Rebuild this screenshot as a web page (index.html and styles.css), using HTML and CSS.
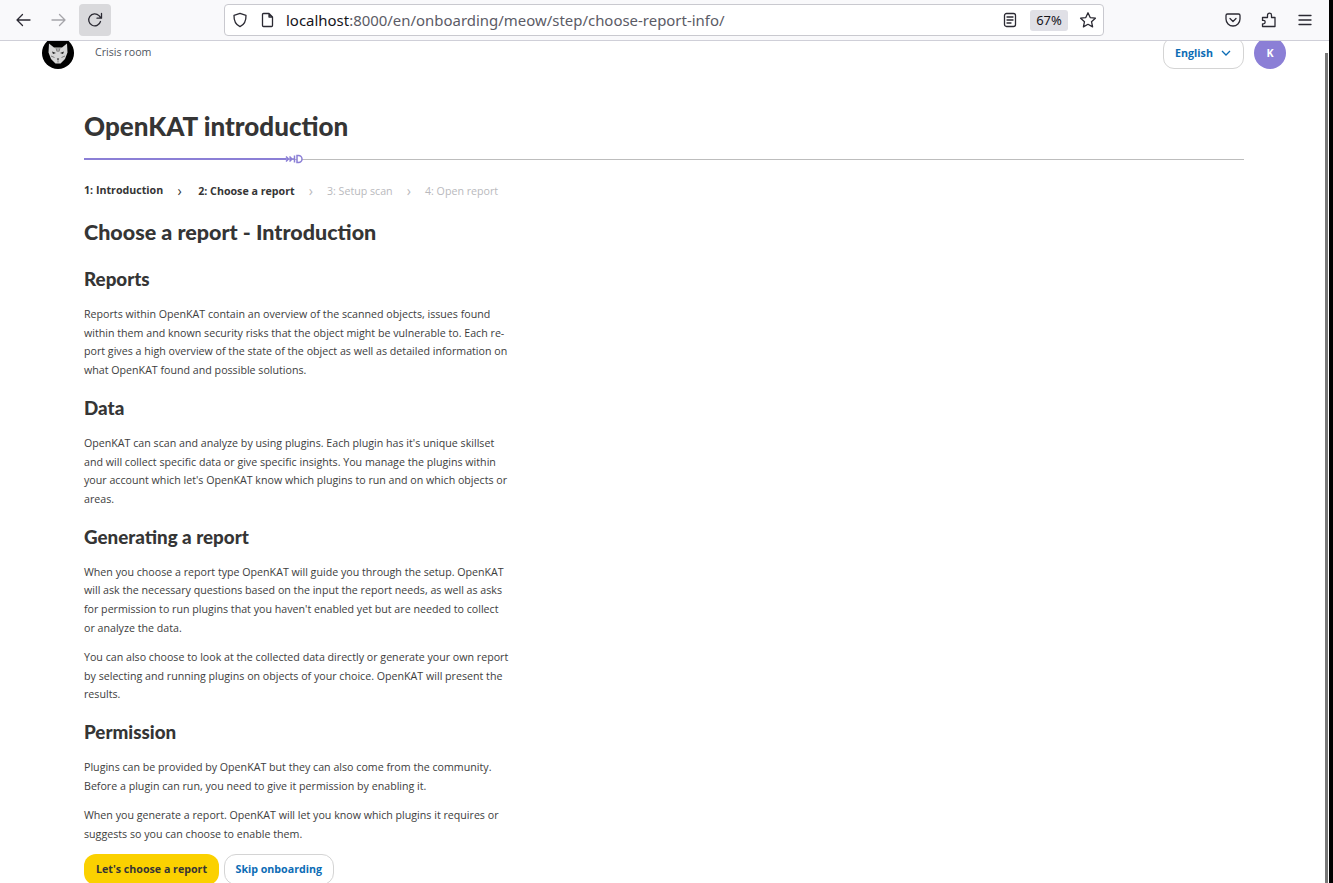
FILE: index.html
```html
<!DOCTYPE html>
<html lang="en">
<head>
<meta charset="utf-8">
<title>OpenKAT introduction</title>
<link rel="stylesheet" href="styles.css">
</head>
<body>
<div class="browser">
  <div class="toolbar">
    <div class="nav">
      <span class="tb"><svg width="16" height="16" viewBox="0 0 16 16"><path d="M15 8H2M7.500 2.500 2 8l5.500 5.500" class="ic"/></svg></span>
      <span class="tb off"><svg width="16" height="16" viewBox="0 0 16 16"><path d="M1 8h13M8.500 2.500 14 8l-5.500 5.500" class="ic"/></svg></span>
      <span class="tb reload"><svg width="16" height="16" viewBox="0 0 16 16"><path d="M13.500 9.500A6 6 0 1 1 12 3.600L14 6M14.500 1.500V6.200H10" class="ic"/></svg></span>
    </div>
    <div class="urlbar">
      <svg class="u-shield" width="16" height="16" viewBox="0 0 16 16"><path d="M8 1.300 14 3.300c.2 5.500-1.800 9.500-6 11.400C3.800 12.800 1.800 8.800 2 3.300z" class="ic"/></svg>
      <svg class="u-page" width="14" height="16" viewBox="0 0 14 16"><path d="M2.500 1.500h5.500l3.500 3.500v8.500a1 1 0 0 1-1 1h-8a1 1 0 0 1-1-1v-11a1 1 0 0 1 1-1zM8 1.500V5h3.500" class="ic"/></svg>
      <span class="url"><b>localhost</b>:8000/en/onboarding/meow/step/choose-report-info/</span>
      <svg class="u-reader" width="14" height="16" viewBox="0 0 14 16"><rect x="1.500" y="1.500" width="11" height="13" rx="2" class="ic"/><path d="M4 5h6M4 8h6M4 11h4" class="ic"/></svg>
      <span class="zoom">67%</span>
      <svg class="u-star" width="18" height="18" viewBox="0 0 18 18"><path d="m9 1.800 2.200 4.800 5.200.6-3.900 3.500 1.100 5.200L9 13.300l-4.600 2.600 1.100-5.200L1.600 7.200l5.200-.6z" class="ic"/></svg>
    </div>
    <div class="tools">
      <svg width="16" height="16" viewBox="0 0 16 16"><path d="M2.500 2h11A1.500 1.500 0 0 1 15 3.500V7a7 7 0 0 1-14 0V3.500A1.500 1.500 0 0 1 2.500 2z" class="ic"/><path d="m5 6.500 3 3 3-3" class="ic"/></svg>
      <svg width="16" height="16" viewBox="0 0 16 16"><path d="M1.500 5.500h5V3.200a2 2 0 0 1 4 0v2.300h3.500v9H1.500v-2.700h1a1.700 1.700 0 0 0 0-3.400h-1z" class="ic"/></svg>
      <svg width="16" height="16" viewBox="0 0 16 16"><path d="M2 3.500h12M2 8h12M2 12.500h12" class="ic"/></svg>
    </div>
  </div>
  <div class="viewport">
    <div class="page">
      <header class="site-header">
        <div class="brand">
          <span class="logo"><svg width="32" height="32" viewBox="0 0 32 32"><circle cx="16" cy="16" r="16" fill="#000"/><path d="M7 6.500 12 10.500h8l5-4 .5 9-2.500 6.500-4.500 4.500h-5L9 22l-2.500-6.500z" fill="#d6d6d6"/><path d="M10 14.500l4 1.500-3 1zM22 14.500l-4 1.500 3 1zM14.800 21.500h2.400L16 23.500z" fill="#222"/><path d="M14 11l1 3.500M18 11l-1 3.500M16 11v4M9 19l3.500 1.500M23 19l-3.500 1.500M16 23.500v2" fill="none" stroke="#666" stroke-width=".8"/></svg></span>
          <span class="crisis">Crisis room</span>
        </div>
        <div class="account">
          <button class="lang">English <svg width="10" height="6" viewBox="0 0 10 6"><path d="m1 1 4 4 4-4" fill="none" stroke="#0b6cb5" stroke-width="1.300"/></svg></button>
          <span class="avatar">K</span>
        </div>
      </header>
      <main class="content">
        <h1>OpenKAT introduction</h1>
        <div class="progress">
          <div class="bar"></div>
          <svg class="bar-mark" width="18" height="10" viewBox="0 0 18 10"><path d="M0 5h10M1 2.500 3.500 5 1 7.500M4.500 2.500 7 5 4.500 7.500M9.500 1.500v7M12 1.500h1.500a3.500 3.500 0 0 1 0 7H12z" fill="#fff" stroke="#8b7fd6" stroke-width="1.500"/></svg>
        </div>
        <ol class="steps">
          <li class="done">1: Introduction</li>
          <li class="current">2: Choose a report</li>
          <li>3: Setup scan</li>
          <li>4: Open report</li>
        </ol>
        <h2>Choose a report - Introduction</h2>
        <section class="intro">
          <h3>Reports</h3>
          <p>Reports within OpenKAT contain an overview of the scanned objects, issues found<br>within them and known security risks that the object might be vulnerable to. Each re-<br>port gives a high overview of the state of the object as well as detailed information on<br>what OpenKAT found and possible solutions.</p>
          <h3>Data</h3>
          <p>OpenKAT can scan and analyze by using plugins. Each plugin has it's unique skillset<br>and will collect specific data or give specific insights. You manage the plugins within<br>your account which let's OpenKAT know which plugins to run and on which objects or<br>areas.</p>
          <h3>Generating a report</h3>
          <p>When you choose a report type OpenKAT will guide you through the setup. OpenKAT<br>will ask the necessary questions based on the input the report needs, as well as asks<br>for permission to run plugins that you haven't enabled yet but are needed to collect<br>or analyze the data.</p>
          <p>You can also choose to look at the collected data directly or generate your own report<br>by selecting and running plugins on objects of your choice. OpenKAT will present the<br>results.</p>
          <h3>Permission</h3>
          <p>Plugins can be provided by OpenKAT but they can also come from the community.<br>Before a plugin can run, you need to give it permission by enabling it.</p>
          <p>When you generate a report. OpenKAT will let you know which plugins it requires or<br>suggests so you can choose to enable them.</p>
        </section>
        <div class="actions">
          <a class="btn primary">Let's choose a report</a>
          <a class="btn ghost">Skip onboarding</a>
        </div>
      </main>
    </div>
    <div class="scrollbar"><div class="thumb"></div></div>
  </div>
</div>
<div class="edge"></div>
</body>
</html>
```
FILE: styles.css
```css
* { box-sizing: border-box; }
html, body { margin: 0; height: 100%; overflow: hidden; background: #fff; }
body { font-family: "Open Sans", sans-serif; color: #353535; }
.browser { height: 883px; display: flex; flex-direction: column; }
.edge { position: fixed; top: 0; right: 0; width: 4px; height: 100%; background: #000; }
.ic { fill: none; stroke: #2b2a33; stroke-width: 1.300; stroke-linecap: round; stroke-linejoin: round; }

.toolbar { height: 41px; width: 1329px; flex: none; background: #f9f9fb; border-bottom: 1px solid #cfcfd8; display: flex; align-items: center; overflow: hidden; }
.nav { display: flex; gap: 4px; padding-left: 7px; width: 224px; flex: none; }
.tb { width: 32px; height: 32px; border-radius: 4px; display: flex; align-items: center; justify-content: center; }
.tb.off { opacity: .4; }
.tb.reload { background: #d9d9dc; }
.urlbar { width: 880px; height: 32px; flex: none; background: #fff; border: 1px solid #c9c9cf; border-radius: 4px; display: flex; align-items: center; padding-left: 7px; }
.u-shield { flex: none; }
.u-page { margin-left: 13px; flex: none; }
.url { margin-left: 11px; flex: 1; font: 14.950px/20px "Noto Sans", "Open Sans", sans-serif; color: #5b5b66; white-space: nowrap; }
.url b { font-weight: 400; color: #15141a; }
.u-reader { flex: none; }
.zoom { margin-left: 13px; width: 38px; height: 21px; background: #e0e0e6; border-radius: 3px; font: 13px/21px "Noto Sans", sans-serif; color: #15141a; text-align: center; flex: none; }
.u-star { margin: 0 6px 0 11px; flex: none; }
.tools { display: flex; gap: 20px; margin-left: 121px; }

.viewport { flex: 1; position: relative; overflow: hidden; }
.page { height: 100%; }
.site-header { margin-top: -4px; height: 32px; padding: 0 47px 0 42px; display: flex; justify-content: space-between; }
.brand { display: flex; gap: 21px; }
.logo { width: 32px; height: 32px; display: block; }
.crisis { font-size: 10.670px; line-height: 18px; margin-top: 6px; color: #4f5560; }
.account { display: flex; gap: 10px; }
.lang { width: 81px; height: 32px; border: 1px solid #d4d4d4; border-radius: 11px; background: #fff; color: #0b6cb5; font: 700 10.670px "Open Sans", sans-serif; display: flex; align-items: center; justify-content: center; gap: 8px; padding: 0 1px 0 0; }
.avatar { width: 32px; height: 32px; border-radius: 50%; background: #8b7fd6; color: #fff; font-size: 10.670px; font-weight: 700; display: flex; align-items: center; justify-content: center; }

.content { padding: 0 89px 0 84px; }
h1, h2, h3 { font-family: "Lato", sans-serif; font-weight: 900; color: #353535; margin: 0; }
h1 { font-size: 26px; line-height: 34px; margin-top: 40px; }
.progress { position: relative; height: 1px; margin-top: 16px; background: #bdbdbd; }
.bar { position: absolute; left: 0; top: -1px; width: 202px; height: 2px; background: #8b7fd6; }
.bar-mark { position: absolute; left: 201px; top: -5px; }
.steps { list-style: none; display: flex; margin: 22px 0 0; padding: 0; font-size: 10.670px; line-height: 18px; color: #b9b9bd; }
.steps li { display: flex; align-items: center; }
.steps li + li::before { content: "›"; width: 32.300px; text-align: center; font-size: 14px; font-weight: 400; color: #b9b9bd; }
.steps li.current::before { width: 35px; color: #353535; text-indent: -2px; }
.steps .done, .steps .current { font-weight: 700; color: #353535; }
.steps .done { position: relative; top: -1px; }
h2 { font-size: 21.500px; line-height: 28px; margin-top: 18px; }
h3 { font-size: 18.800px; line-height: 24px; margin-bottom: 14px; }
.intro { margin-top: 21px; }
.intro h3 { margin-top: 16.200px; }
.intro h3:first-child { margin-top: 0; }
.intro p { margin: 0 0 10.500px; font-size: 10.670px; line-height: 18.670px; color: #3d3d3d; white-space: nowrap; }
.actions { display: flex; gap: 5px; margin-top: 4.800px; }
.btn { height: 31px; border-radius: 12px; font-size: 10.670px; font-weight: 700; display: flex; align-items: center; padding: 0 12px; }
.primary { background: #fbd100; color: #353535; }
.ghost { border: 1px solid #d4d4d4; color: #0b6cb5; padding: 0 10.500px; }

.scrollbar { position: absolute; top: 0; left: 1325px; width: 4px; height: 100%; background: #fff; }
.thumb { position: absolute; left: 0; top: 12px; width: 3px; height: 842px; background: #777; }
```
